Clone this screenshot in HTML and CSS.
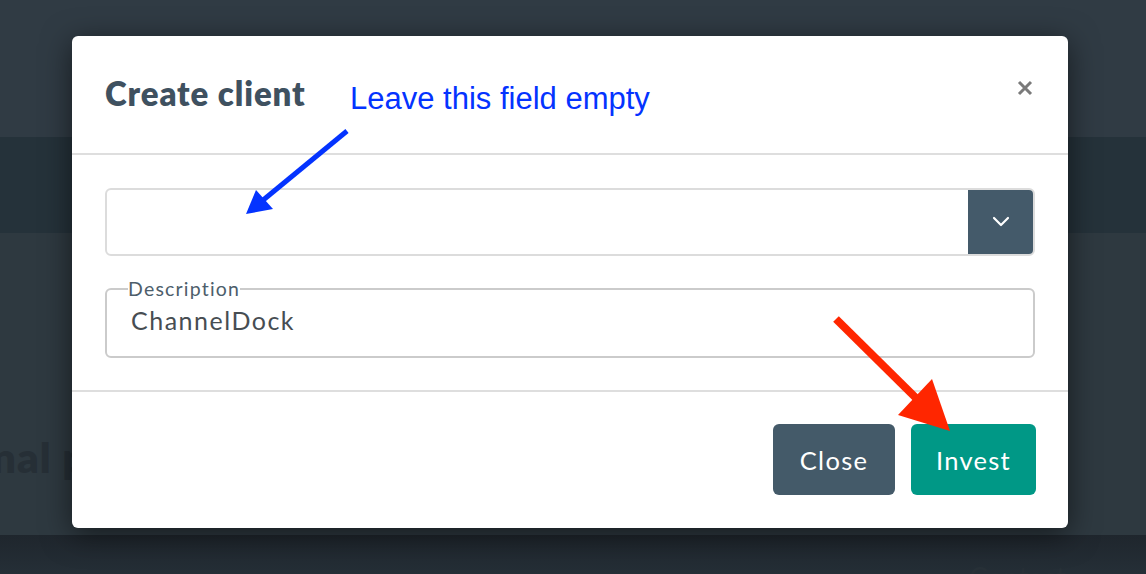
FILE: index.html
```html
<!DOCTYPE html>
<html>
<head>
<meta charset="utf-8">
<link rel="stylesheet" href="styles.css">
</head>
<body>
<div class="page">
  <div class="bg-top"></div>
  <div class="bg-band"></div>
  <div class="bg-mid"><div class="bg-heading">nal p</div></div>
  <div class="bg-bottom"><span class="bg-faint">Contact</span></div>
</div>

<div class="modal">
  <div class="modal-header">
    <h2 class="modal-title">Create client</h2>
    <span class="modal-close" aria-label="Close">
      <svg width="16" height="16" viewBox="0 0 16 16"><path d="M2 2 L14 14 M14 2 L2 14" stroke="#7a7a7a" stroke-width="3" stroke-linecap="butt"/></svg>
    </span>
  </div>
  <div class="modal-body">
    <div class="select">
      <div class="select-value"></div>
      <div class="select-btn">
        <svg width="20" height="12" viewBox="0 0 20 12"><path d="M3 2 L10 9 L17 2" fill="none" stroke="#fff" stroke-width="2.2" stroke-linecap="round" stroke-linejoin="round"/></svg>
      </div>
    </div>
    <fieldset class="field">
      <legend class="field-legend">Description</legend>
      <div class="field-value">ChannelDock</div>
    </fieldset>
  </div>
  <div class="modal-footer">
    <button class="btn btn-close">Close</button>
    <button class="btn btn-invest">Invest</button>
  </div>
</div>

<div class="note">Leave this field empty</div>
<svg class="arrows" width="1146" height="574" viewBox="0 0 1146 574">
  <line x1="347" y1="131" x2="262" y2="201" stroke="#0433ff" stroke-width="5"/>
  <polygon points="246,214 256,190 273,209" fill="#0433ff"/>
  <line x1="836" y1="319" x2="918" y2="400" stroke="#ff2600" stroke-width="8"/>
  <polygon points="950,431 932,379 898,415" fill="#ff2600"/>
</svg>
</body>
</html>
```

FILE: styles.css
```css
html, body {
  margin: 0;
  padding: 0;
}
body {
  width: 1146px;
  height: 574px;
  overflow: hidden;
  position: relative;
  font-family: "Lato", "Open Sans", sans-serif;
  background: #2e3941;
}
.page {
  display: flex;
  flex-direction: column;
  height: 574px;
}
.bg-top {
  height: 137px;
  background: #303b44;
}
.bg-band {
  height: 96px;
  background: #25323a;
}
.bg-mid {
  height: 302px;
  background: #2e3940;
}
.bg-heading {
  margin: 199px 0 0 -8px;
  font-family: "Lato", sans-serif;
  font-weight: 800;
  font-size: 42px;
  letter-spacing: 1px;
  color: #262f36;
  line-height: 50px;
}
.bg-bottom {
  height: 39px;
  background: linear-gradient(#1f262d, #252f37);
  display: flex;
  justify-content: flex-end;
  align-items: flex-end;
}
.bg-faint {
  margin: 0 80px -20px 0;
  font-size: 28px;
  color: #283138;
}

.modal {
  position: absolute;
  left: 72px;
  top: 36px;
  width: 996px;
  height: 492px;
  background: #fff;
  border-radius: 6px;
  box-shadow: 0 6px 30px rgba(0, 0, 0, 0.55);
  display: flex;
  flex-direction: column;
}
.modal-header {
  border-bottom: 2px solid #dedede;
  display: flex;
  justify-content: space-between;
  align-items: flex-start;
  padding: 0 35px 0 33px;
  box-sizing: border-box;
  height: 119px;
}
.modal-title {
  margin: 37px 0 0 0;
  font-family: "Lato", sans-serif;
  font-weight: 800;
  font-size: 33px;
  line-height: 40px;
  color: #3f5160;
  letter-spacing: 0.9px;
}
.modal-close {
  margin-top: 44px;
  display: flex;
}
.modal-body {
  padding: 33px 33px 0 33px;
  height: 237px;
  box-sizing: border-box;
  border-bottom: 2px solid #dedede;
}
.select {
  height: 68px;
  box-sizing: border-box;
  border: 2px solid #dcdcdc;
  border-radius: 6px;
  display: flex;
  overflow: hidden;
}
.select-value {
  flex: 1;
}
.select-btn {
  width: 65px;
  background: #445a6a;
  display: flex;
  align-items: center;
  justify-content: center;
}
.field {
  margin: 22px 0 0 0;
  padding: 0 24px;
  height: 80px;
  box-sizing: border-box;
  border: 2px solid #cbcbcb;
  border-radius: 6px;
}
.field-legend {
  padding: 0;
  font-size: 19.5px;
  line-height: 22px;
  letter-spacing: 1.2px;
  color: #4d5e6b;
  margin-left: -3px;
}
.field-value {
  font-size: 25px;
  line-height: 30px;
  letter-spacing: 1.5px;
  color: #474d52;
  margin-top: 5px;
}
.modal-footer {
  flex: 1;
  display: flex;
  justify-content: flex-end;
  align-items: flex-start;
  gap: 16px;
  padding: 32px 32px 0 0;
}
.btn {
  height: 71px;
  border: none;
  border-radius: 6px;
  color: #fff;
  font-family: "Lato", sans-serif;
  font-size: 25.5px;
  letter-spacing: 1.3px;
  padding: 0;
  cursor: pointer;
}
.btn-close {
  width: 122px;
  background: #445a69;
}
.btn-invest {
  width: 125px;
  background: #009886;
}
.note {
  position: absolute;
  left: 350px;
  top: 81px;
  font-family: "Liberation Sans", Arial, sans-serif;
  font-size: 31px;
  line-height: 36px;
  color: #0433ff;
}
.arrows {
  position: absolute;
  left: 0;
  top: 0;
}
```
